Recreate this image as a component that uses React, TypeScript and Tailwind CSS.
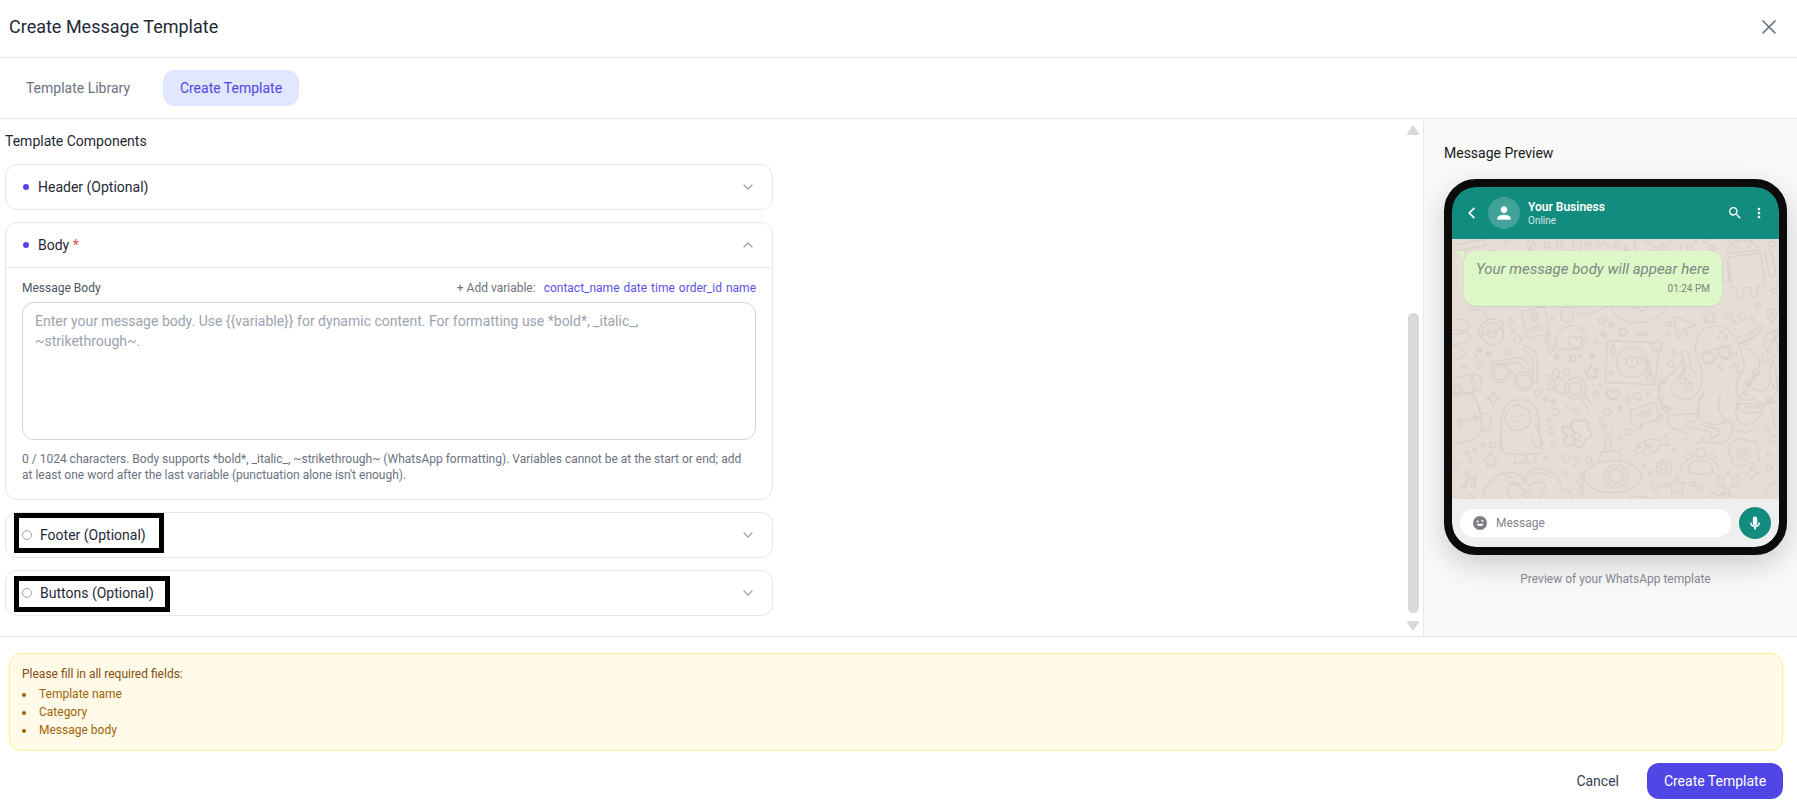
import { useState, type ReactNode } from "react";
import { ChevronDown, ChevronUp, X } from "lucide-react";
import { MdMoreVert, MdPerson, MdSearch } from "react-icons/md";

const VARIABLES = ["contact_name", "date", "time", "order_id", "name"];
const MISSING = ["Template name", "Category", "Message body"];

function Dots({ points }: { points: [number, number, number][] }) {
  return (
    <>
      {points.map(([x, y, r]) => (
        <circle key={`${x}-${y}`} cx={x} cy={y} r={r} />
      ))}
    </>
  );
}

/* Chat wallpaper: outline doodles drawn in groups at three units per pixel. */
function Wallpaper() {
  return (
    <svg
      aria-hidden="true"
      className="absolute inset-0 size-full"
      viewBox="0 0 327 260"
      preserveAspectRatio="xMidYMid slice"
      fill="none"
      stroke="#dad0c9"
      strokeWidth="3.6"
      strokeLinecap="round"
      strokeLinejoin="round"
    >
      <g transform="translate(-22 -69) scale(0.33333)">
        <path d="M66 226l98-18M70 244l90-16c10-2 10-16 0-16M100 262l80-20c14-4 22 4 12 10l-60 16" />
        <path d="M296 208l-6 18h14l-8 20 24-26h-14l6-12" />
        <circle cx="424" cy="226" r="44" />
        <circle cx="424" cy="226" r="30" />
        <path d="M412 240c8 8 20 2 18-10v-18M500 214l12 14 14-12 10 14" />
        <path d="M612 208l14 60 120 0 10-50M626 262l110-52M640 208l90 56M690 214l30 40" />
        <path d="M892 250c-4-40 70-60 96-10zM900 214l10 14M968 208l-8 12" />
        <path d="M896 262l96-14 12 100-24 4 2 22c-6 12-20 8-20-2l-2-20-20 2 2 22c-6 12-20 8-20-2l-4-20-14-2z" />
        <path d="M1004 246c10-8 20-4 22 4l12 60c-4 12-16 12-20 2zM876 268c10-4 16 0 16 8l6 56c-6 10-18 8-20-4z" />
        <path d="M1046 336l-8 18-18 8 18 8 8 18" />
        <Dots points={[[228, 212, 7], [350, 226, 8], [480, 222, 6], [560, 226, 8], [588, 236, 6], [778, 232, 8], [796, 216, 5], [828, 214, 6], [846, 234, 8], [1026, 222, 8], [918, 232, 3], [956, 228, 3]]} />
        <path d="M432 406l12 26c30 4 60-6 90-26M540 406c14 30 36 50 70 52 50 2 90-20 106-52M612 420l10-12 12 16 12-16 12 12" />
        <path d="M278 424l58-14c6 0 8 2 10 8l10 64c0 6-2 8-8 10l-50 12c-6 0-8-4-8-10l-16-64z" />
        <circle cx="312" cy="442" r="12" />
        <path d="M304 442c4 8 14 8 16 0M312 430v10M304 474l24-6c8 2 8 10 0 12l-22 6c-8-2-8-10-2-12z" />
        <path d="M392 428c2-24 34-22 38 2 2 16-8 24-18 28-12-4-20-14-20-30z" />
        <path d="M380 538c-18-46 30-84 66-66 18 8 26 26 22 40-4 14-12 22-20 26zM442 536c-20-10-36-22-26-32 8-8 18-4 22 2 6-10 20-8 20 4 0 10-8 16-16 26z" />
        <path d="M66 450c30-6 48 4 52 18-8 16-26 24-52 26M66 480c30-2 50 6 54 20-8 16-26 24-54 24M66 532c26-4 38 4 40 18-6 12-18 18-40 20" />
        <path d="M116 420c30-6 54 4 56 30M148 500c-8-30 14-56 50-52 24 2 28 20 12 30-18 10-40 12-62 22z" />
        <circle cx="188" cy="492" r="33" />
        <circle cx="186" cy="490" r="13" />
        <path d="M732 438l68 28-34 10-24 28zM766 476l8 24" />
        <path d="M838 418l6 14 16 2-12 10 4 16-14-8-14 8 4-16-10-10 14-2z" />
        <path d="M1026 458c-10-12-16-20-16-28 2-16 26-18 30-2 0 12-8 20-14 30z" />
        <circle cx="1025" cy="432" r="5" />
        <circle cx="1040" cy="520" r="38" />
        <path d="M1004 512c20 4 36-8 40-30M1010 544c14-24 22-40 36-46M1030 486l18 66" />
        <Dots points={[[244, 454, 8], [246, 484, 5], [262, 508, 11], [366, 446, 5], [354, 500, 6], [350, 512, 7], [516, 452, 9], [544, 464, 7], [578, 488, 11], [518, 490, 6], [628, 492, 6], [644, 490, 7], [718, 462, 7], [716, 490, 4], [896, 434, 9], [936, 440, 11], [966, 446, 6], [914, 458, 5], [984, 408, 8], [176, 550, 6], [148, 542, 4], [232, 546, 7], [362, 540, 8], [380, 560, 6], [428, 566, 9], [452, 558, 5], [486, 560, 5]]} />
      </g>
      <g transform="translate(-2 61) scale(0.33333)">
        <circle cx="152" cy="219" r="29" />
        <circle cx="152" cy="219" r="21" />
        <circle cx="222" cy="244" r="29" />
        <circle cx="222" cy="244" r="21" />
        <path d="M180 218c6-6 14-2 18 10M124 206l2-22 84-12c16 2 26 18 26 34l-14-2c-6-12-16-16-28-16l-60 8M220 146c0-10 30-6 38 16 6 26 2 56 4 84l-14 2V172c-4-14-26-16-28-26z" />
        <path d="M6 236l60-14c20-4 26 8 28 22 4 20-4 28-24 32l-64 18M58 226l14 48M66 224l14 48" />
        <circle cx="22" cy="270" r="16" />
        <circle cx="22" cy="270" r="8" />
        <path d="M6 284c50-14 72-4 84 46" />
        <path d="M130 272c2 14 8 20 22 23-14 3-20 9-22 23-2-14-8-20-22-23 14-3 20-9 22-23z" />
        <path d="M312 208c12-8 24 16 12 22-10 4-20-16-12-22zM340 208c10-8 22 10 16 18-8 4-18-8-16-18zM290 226c10-6 22 8 18 18-8 4-20-8-18-18zM292 256c10-8 20 4 18 14-8 4-20-4-18-14zM342 242c-20-14-32-4-24 12-4 20 8 28 26 26" />
        <circle cx="376" cy="265" r="32" />
        <circle cx="376" cy="265" r="19" />
        <path d="M394 298l12-8 24 32M394 298l22 34" />
        <path d="M424 194l6 14 14 2-10 12 4 14-14-4-12 6 0-14-10-12 14-2z" />
        <path d="M472 124c10-4 24-2 38-2M472 124l-6 116c0 6 4 8 10 8h34M488 136c10 10 10 22 0 36-8-12-8-24 0-36z" />
        <path d="M490 300c-14-10-22-16-22-24 4-12 16-10 20 0 4-10 20-8 20 2-2 10-8 16-18 22z" />
        <Dots points={[[88, 150, 6], [116, 162, 6], [78, 170, 4], [42, 199, 6], [90, 197, 9], [264, 278, 9], [286, 299, 5], [310, 304, 5], [320, 172, 5], [368, 176, 9], [392, 168, 5], [428, 168, 5], [438, 282, 8], [452, 254, 5], [484, 218, 6], [440, 126, 6], [464, 104, 6]]} />
      </g>
      <g transform="translate(158 61) scale(0.33333)">
        <circle cx="66" cy="186" r="46" />
        <circle cx="66" cy="186" r="17" />
        <circle cx="66" cy="186" r="2" />
        <path d="M0 122l120 6M146 152l-10 94c0 6-4 8-10 8L0 248M90 164l26 20 6 40M84 170l22 16M110 184l4 40" />
        <circle cx="120" cy="234" r="8" />
        <path d="M142 116l6 12 14 2-10 10 4 16-14-6-14 6 0-14-8-12 14 0z" />
        <path d="M272 200c-34-70-8-124 50-122 50 4 66 50 84 126M270 160l92-26 4 28c-4 22-32 20-38-4l-8 4c4 34-42 40-46 12z" />
        <circle cx="296" cy="174" r="16" />
        <circle cx="342" cy="158" r="16" />
        <path d="M378 114c30-8 54-20 72-40 10 0 10 10 2 20-16 18-34 30-66 36" />
        <path d="M272 200c10 40 4 70-20 90-24 14-60 8-70-16 0-20 20-36 40-60 10-18-8-40-6-58 20-8 24 14 24 34 0 16 6 26 22 30M216 180c-4 30-60 50-70 90 0 40 20 54 40 60M222 200c-10 26 20 60 28 50" />
        <path d="M406 204c-30 30-36 70-14 90 20 14 44 4 44-4M396 150c40-6 58 30 52 60-10 30-46 46-44 76M434 220c-10 20-16 26-20 30 20 30 60 30 66-6 4-20-6-44 8-60 10 10 14 60 14 90-20 40-60 52-100 46M290 272c-20 10-26 30-24 58M330 292c-6 12-6 24-4 38M384 330c-4-20 0-30 10-30" />
        <Dots points={[[4, 72, 6], [40, 96, 11], [192, 158, 7], [182, 193, 9], [218, 242, 9], [236, 262, 11], [160, 244, 7], [152, 292, 9], [172, 324, 6], [334, 98, 4], [348, 111, 5], [325, 115, 3], [332, 202, 7], [364, 202, 4], [380, 192, 6], [378, 164, 4], [384, 214, 3], [404, 128, 7], [428, 106, 5], [438, 218, 9], [414, 246, 9], [406, 278, 7], [450, 314, 11], [478, 300, 8], [466, 177, 9], [82, 289, 11], [54, 299, 6], [114, 281, 5], [30, 324, 5], [498, 258, 8]]} />
      </g>
      <g transform="translate(-22 121) scale(0.33333)">
        <path d="M66 106c20-12 48-14 64-4 16 30 22 64 26 96 0 20-10 34-30 40-20 8-40 12-60 12M66 192l80-20c8-2 10-8 6-14M158 158c20-4 26 20 26 36-4 14-14 18-28 18M82 180l10-4 4 18-10 4zM130 168l8-4 4 18-8 2z" />
        <path d="M218 276c-4-50-14-100 8-136 20-30 76-28 92 6 14 40 10 90 20 132l-20 4c-30-2-60 8-100-6zM216 204c-8 20-8 40-2 66M312 190c10 10 22 40 26 62-4 10-18 12-24 6l-10-30M258 288l-6 22h30l2-26M290 284l2 26 26-4-6-26" />
        <circle cx="264" cy="174" r="38" />
        <path d="M242 172c2-8 10-8 12 0M268 168c4-8 12-6 12 0M252 184c6 8 18 4 18-2" />
        <path d="M432 216c-22-24 0-44 16-32 16-10 34 0 24 24 22 2 16 34-8 30 0 24-24 34-32 12-22 20-44-4-20-24-30-12-14-46 20-10z" strokeWidth="5" />
        <path d="M440 212l4 10 10 2-8 8 2 10-10-4-8 6 0-12-8-6 12-2z" />
        <path d="M600 152l68-24c8 0 10 2 12 8l6 30c0 8-4 12-10 14l-44 14 4 14-18-10c-8 0-10-4-12-10zM626 160l38-12M624 168l42-12M630 174l30-8M672 186c8-14 16-20 26-22l-10 20z" />
        <path d="M612 274c16-30 40-44 78-32l20-18-4 22 12 12-24-4c-18 30-48 38-82 20zM640 238c10 10 8 26-2 38M650 256l20-4M648 264l16-4" />
        <circle cx="628" cy="262" r="3" />
        <path d="M508 306l4-28c18-6 38-6 58-2l2 22M524 276v-48c6-6 14-6 18 0l2 44M524 240h18M524 252h18M524 264h18" />
        <ellipse cx="548" cy="350" rx="86" ry="48" />
        <circle cx="558" cy="349" r="35" />
        <circle cx="558" cy="349" r="20" />
        <circle cx="558" cy="349" r="28" strokeWidth="5" strokeDasharray="1 16" />
        <path d="M464 368c-14-10-20-30-12-32 8 0 8 20 4 34 12 20 4 36-2 36s-10-18 2-36c-10 4-18-4-16-10" />
        <path d="M160 416c0-40 30-66 60-76 30-6 60 0 64 26-10 14-26 6-36 2M288 372c-10-30 20-50 50-46 40 10 50 40 60 60 20 2 30 16 28 30M206 342c20 0 30 4 40 14M300 344c20-10 40-6 60 6M290 394c-30-20-50-30-56-14-4 10 0 24 10 36M294 378c30-20 56-14 50 10-4 12-10 20-20 28" />
        <path d="M292 412c-14-8-18-16-12-20 6-4 10 0 12 6 4-8 14-6 14 0 0 6-8 10-14 14z" />
        <path d="M110 352l28-4-4 26M110 352l-4 26M112 360l26-4" />
        <circle cx="102" cy="378" r="6" />
        <circle cx="130" cy="376" r="6" />
        <path d="M182 278l6 14 16 2-12 10 6 16-16-6-12 10 0-16-10-10 14-4zM66 286l10 20 14 2-24 30" />
        <path d="M484 14l6 14 14 0-8 12 6 14-16-4-12 6-2-14-10-10 16-4z" />
        <path d="M548 122c-14-8-22-14-22-22 4-12 16-12 20-2 6-12 22-8 22 2-2 10-10 16-20 22z" />
        <path d="M702 296l6 8 10-4 2 10 8 6-6 8 2 12-12 0-4 8-10-4-10 4-2-10-10-4 6-10-4-10 12-2z" />
        <circle cx="701" cy="320" r="10" />
        <path d="M776 334c0-26 20-34 44-34 20 2 28 16 28 38-24 6-50 6-72-4zM752 328c0-14 6-22 20-26M866 328c0-14-6-20-16-24" />
        <circle cx="812" cy="278" r="15" />
        <circle cx="776" cy="288" r="10" />
        <circle cx="846" cy="288" r="11" />
        <path d="M894 262c0-8 2-10 8-12l10-2 6-8 28-4 6 8 20-2c6 0 8 2 8 8l8 46c0 6-2 8-8 10l-60 12c-8 0-12-2-12-8z" />
        <circle cx="940" cy="283" r="19" />
        <circle cx="940" cy="283" r="7" />
        <path d="M966 318c2 14 8 20 22 22-14 2-20 8-22 22-2-14-8-18-20-20 14-4 18-10 20-24z" />
        <path d="M742 350l6 18 20 0-14 14 6 20-18-8-18 10 2-20-14-12 20-4z" />
        <path d="M894 388c-20-10-20-30 0-52 20 20 20 40 0 52zM884 378c-20 4-26-14-20-32l14 6M904 378c18 4 28-14 22-32l-14 6M884 390l-6 26M896 390v20M600 416l6-8 66 6M834 414l10-16 20 8 20-8 30 12M1008 414c-6-30 10-44 38-44" />
        <path d="M690 60c-10 40-4 80 20 100 20 10 60 0 92 0 8 20-10 30-30 24-14 16 10 24 40 24 30 4 40 20 30 40-16 2-40-10-24-16 4 10-30 26-24 18M716 164c-10 20 0 40 30 46 20 4 40 20 20 30l-20 0M830 92c-30 30-36 60-14 90 30 20 60 10 90-4M870 112c-10 26-4 60 30 74 10 10 14 22 0 46-20 20-40 20-56 14-4-16 16-14 24-24 6-20-40-20-56-30M920 130c-6 30 0 50 14 60 24 8 46 0 66-34-30 0-46 8-62-4-20-10 0-16-18-22zM912 206c30 18 60 10 70-10M920 130l90 4c20-4 36-10 36-20" />
        <path d="M1026 156l20-8M1026 156l10 50 10 6" />
        <Dots points={[[346, 118, 6], [370, 126, 5], [376, 156, 11], [412, 142, 5], [438, 152, 8], [358, 178, 6], [364, 212, 9], [368, 248, 5], [514, 178, 6], [532, 156, 11], [570, 147, 5], [522, 200, 7], [548, 198, 2], [598, 215, 9], [572, 236, 5], [410, 296, 11], [440, 295, 7], [476, 299, 9], [432, 316, 3], [406, 336, 6], [188, 255, 9], [158, 254, 6], [134, 271, 6], [110, 278, 6], [120, 302, 7], [110, 336, 6], [350, 292, 5], [734, 270, 6], [662, 341, 6], [644, 316, 4], [676, 380, 11], [702, 375, 6], [790, 371, 7], [810, 383, 8], [1012, 209, 8], [1028, 237, 10], [1016, 284, 6], [1018, 324, 8], [122, 410, 7]]} />
      </g>
    </svg>
  );
}

function Section({
  title,
  required,
  filled,
  open,
  onToggle,
  mark,
  children,
}: {
  title: string;
  required?: boolean;
  filled?: boolean;
  open: boolean;
  onToggle: () => void;
  mark?: ReactNode;
  children?: ReactNode;
}) {
  const Chevron = open ? ChevronUp : ChevronDown;
  return (
    <section className="relative rounded-xl border border-[#e5e7eb]">
      <button
        type="button"
        aria-expanded={open}
        onClick={onToggle}
        className="flex h-11 w-full items-center justify-between px-4 text-sm text-[#1f2937]"
      >
        <span className="flex items-center gap-2">
          {filled ? (
            <span className="mr-px ml-px size-1.5 rounded-full bg-[#4f46e5]" />
          ) : (
            <span className="size-[10px] rounded-full border border-[#9ca3af]" />
          )}
          <span>
            {title}
            {required && <span className="text-[#ef4444]"> *</span>}
          </span>
        </span>
        <Chevron className="size-4 text-[#9ca3af]" strokeWidth={2} />
      </button>
      {mark}
      {open && children}
    </section>
  );
}

function PhonePreview() {
  return (
    <div className="overflow-hidden rounded-[32px] border-8 border-[#0b0b0b] bg-[#0b0b0b] shadow-[0_10px_30px_rgba(0,0,0,0.18)]">
      <div className="overflow-hidden rounded-[24px]">
        <div className="flex h-[52px] items-center gap-2 bg-[#128c7e] px-3 text-white">
          <svg aria-hidden="true" viewBox="0 0 16 16" className="size-4" fill="none" stroke="currentColor" strokeWidth="1.7">
            <path d="M10.4 2.8L5.2 8l5.2 5.2" />
          </svg>
          <span className="flex size-8 items-center justify-center rounded-full bg-white/20">
            <MdPerson className="size-5" />
          </span>
          <span className="flex flex-1 flex-col">
            <span className="text-xs leading-4 font-semibold">Your Business</span>
            <span className="text-[10px] leading-3 text-white/80">Online</span>
          </span>
          <MdSearch className="size-4" />
          <MdMoreVert className="size-4" />
        </div>
        <div className="relative h-[260px] bg-[#e5ddd6] px-3 py-3">
          <Wallpaper />
          <div className="relative flex h-[55px] w-[258px] flex-col rounded-xl bg-[#dcf8c6] px-3 pt-2 shadow-[0_1px_1px_rgba(0,0,0,0.08)]">
            <svg aria-hidden="true" viewBox="0 0 8 8" className="absolute top-0 -left-2 size-2" fill="#dcf8c6">
              <path d="M0 0h8v8z" />
            </svg>
            <p className="text-[15px] leading-5 whitespace-nowrap text-[#7f8782] italic">
              Your message body will appear here
            </p>
            <p className="text-right text-[10px] leading-5 text-[#7b8479]">01:24 PM</p>
          </div>
        </div>
        <div className="flex h-12 items-center gap-2 bg-[#efefef] px-2">
          <div className="flex h-7 flex-1 items-center gap-2 rounded-full bg-white px-3">
            <svg aria-hidden="true" viewBox="0 0 16 16" className="size-4">
              <circle cx="8" cy="8" r="7" fill="#7d7d88" />
              <circle cx="5.6" cy="6.4" r="1" fill="#fff" />
              <circle cx="10.4" cy="5.8" r="1" fill="#fff" />
              <path d="M5 8.800h6.400c0 1.600-1 2.200-3.200 2.200S5 10.400 5 8.800z" fill="#fff" />
            </svg>
            <span className="text-xs text-[#85858f]">Message</span>
          </div>
          <span className="flex size-8 items-center justify-center rounded-full bg-[#128c7e] text-white">
            <svg aria-hidden="true" viewBox="0 0 16 16" className="size-4">
              <rect x="5.8" y="1.600" width="4.400" height="8.600" rx="2.200" fill="currentColor" />
              <path d="M3.700 7.600c.3 2.400 2 3.700 4.300 3.700s4-1.300 4.300-3.700" fill="none" stroke="currentColor" strokeWidth="1.500" />
              <path d="M5.600 11h4.800L8.900 12.400v2H7.100v-2z" fill="currentColor" />
            </svg>
          </span>
        </div>
      </div>
    </div>
  );
}

export default function App() {
  const [open, setOpen] = useState<Record<string, boolean>>({ body: true });
  const [body, setBody] = useState("");
  const toggle = (key: string) => setOpen((o) => ({ ...o, [key]: !o[key] }));
  const hint = `${body.length} / 1024 characters. Body supports *bold*, _italic_, ~strikethrough~ (WhatsApp formatting). Variables cannot be at the start or end; add at least one word after the last variable (punctuation alone isn't enough).`;

  return (
    <div className="flex h-screen flex-col bg-white font-[Roboto,sans-serif] text-[#1f2937]">
      <header className="flex h-[58px] shrink-0 items-center justify-between border-b border-[#e5e7eb] pr-4 pb-1 pl-[9px]">
        <h1 className="text-lg">Create Message Template</h1>
        <button type="button" aria-label="Close" className="text-[#6b7280]">
          <X className="size-6" strokeWidth={1.75} />
        </button>
      </header>

      <nav className="flex h-[61px] shrink-0 items-center gap-4 border-b border-[#e5e7eb] px-[9px] text-sm">
        <button type="button" className="h-9 min-w-[138px] rounded-xl px-4 text-[#6b7280]">
          Template Library
        </button>
        <button type="button" className="h-9 min-w-[136px] rounded-xl bg-[#e0e7ff] px-4 text-[#4f46e5]">
          Create Template
        </button>
      </nav>

      <main className="flex min-h-0 flex-1">
        <div className="min-w-0 flex-1 overflow-hidden pt-3 pr-2 pl-[5px]">
          <h2 className="mb-[13px] text-sm">Template Components</h2>
          <div className="flex max-w-[768px] flex-col gap-3">
            <Section title="Header (Optional)" filled open={!!open.header} onToggle={() => toggle("header")} />

            <Section title="Body" required filled open={!!open.body} onToggle={() => toggle("body")}>
              <div className="border-t border-[#e5e7eb] px-4 pt-3 pb-4 text-xs">
                <div className="flex justify-between">
                  <label htmlFor="message-body" className="text-[#4b5563]">
                    Message Body
                  </label>
                  <div className="flex gap-1 text-[#6b7280]">
                    <span className="pr-1">+ Add variable:</span>
                    {VARIABLES.map((name) => (
                      <button
                        key={name}
                        type="button"
                        className="text-[#5b52e8]"
                        onClick={() => setBody((b) => `${b}{{${name}}}`)}
                      >
                        {name}
                      </button>
                    ))}
                  </div>
                </div>
                <textarea
                  id="message-body"
                  value={body}
                  maxLength={1024}
                  onChange={(e) => setBody(e.target.value)}
                  placeholder="Enter your message body. Use {{variable}} for dynamic content. For formatting use *bold*, _italic_, ~strikethrough~."
                  className="mt-1.5 block h-[138px] w-full resize-none rounded-xl border border-[#d1d5db] px-3 py-2 text-sm placeholder:text-[#9ca3af]"
                />
                <p className="mt-[11px] pr-2 text-[#6b7280]">{hint}</p>
              </div>
            </Section>

            <Section
              title="Footer (Optional)"
              open={!!open.footer}
              onToggle={() => toggle("footer")}
              mark={<div className="pointer-events-none absolute top-0 left-2 h-10 w-[150px] border-5 border-black" />}
            />

            <Section
              title="Buttons (Optional)"
              open={!!open.buttons}
              onToggle={() => toggle("buttons")}
              mark={<div className="pointer-events-none absolute top-[5px] left-2 h-9 w-[156px] border-5 border-black" />}
            />
          </div>
        </div>

        <div aria-hidden="true" className="flex w-5 shrink-0 flex-col items-center pt-1.5 pb-[5px]">
          <svg viewBox="0 0 12 10" className="h-[10px] w-3" fill="#d9d9d9" stroke="#d9d9d9" strokeWidth="2" strokeLinejoin="round">
            <path d="M6 1.500L11 9H1z" />
          </svg>
          <div className="flex-1" />
          <div className="mb-2 h-[300px] w-[11px] rounded-full bg-[#d9d9d9]" />
          <svg viewBox="0 0 12 10" className="h-[10px] w-3" fill="#d9d9d9" stroke="#d9d9d9" strokeWidth="2" strokeLinejoin="round">
            <path d="M6 8.500L1 1h10z" />
          </svg>
        </div>

        <aside className="flex w-[374px] shrink-0 flex-col gap-4 overflow-hidden border-l border-[#e9e9e9] bg-[#f9f9f9] pt-6 pr-[10px] pl-5">
          <h2 className="text-sm text-[#1a1a1a]">Message Preview</h2>
          <PhonePreview />
          <p className="text-center text-xs text-[#85858f]">Preview of your WhatsApp template</p>
        </aside>
      </main>

      <footer className="shrink-0 border-t border-[#e5e7eb] pt-4 pr-3.5 pb-3 pl-[9px]">
        <div className="rounded-xl border border-[#fef08a] bg-[#fffbe8] p-3 text-xs">
          <p className="text-[#854d0e]">Please fill in all required fields:</p>
          <ul className="mt-1 flex list-inside list-disc flex-col gap-0.5 text-[#a16207]">
            {MISSING.map((item) => (
              <li key={item}>{item}</li>
            ))}
          </ul>
        </div>
        <div className="mt-3 flex justify-end gap-3 text-sm">
          <button type="button" className="h-9 rounded-xl px-4 text-[#374151]">
            Cancel
          </button>
          <button type="button" className="h-9 min-w-[136px] rounded-xl bg-[#4f46e5] px-4 text-white">
            Create Template
          </button>
        </div>
      </footer>
    </div>
  );
}
